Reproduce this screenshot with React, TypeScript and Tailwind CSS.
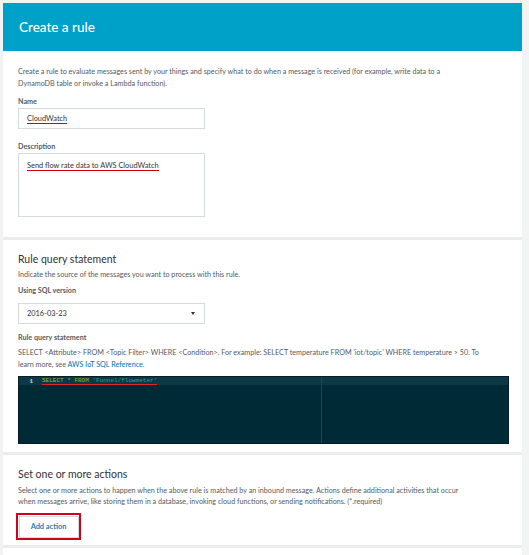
export default function App() {
  const font = { fontFamily: '"Lato", "Open Sans", sans-serif' };
  const mono = { fontFamily: '"Liberation Mono", monospace' };
  return (
    <div
      className="w-[529px] h-[555px] overflow-hidden bg-[#f2f3f3] pt-[3px] pl-[3px] text-[#545b64]"
      style={font}
    >
      <div className="w-[519px] bg-white flex flex-col">
        {/* header */}
        <div className="h-[48px] bg-[#00a1c9] flex items-center px-[16px]">
          <div className="text-white text-[13.5px] font-medium">Create a rule</div>
        </div>

        {/* section 1 */}
        <div className="h-[186px] px-[15px] pt-[15px] flex flex-col">
          <p className="text-[7.2px] leading-[12px] w-[460px]">
            Create a rule to evaluate messages sent by your things and specify what to do when a message is received (for example, write data to a DynamoDB table or invoke a Lambda function).
          </p>
          <div className="mt-[6px] text-[7.2px] leading-[12px] font-bold">Name</div>
          <div className="mt-0 w-[187px] h-[21px] border border-[#d5dbdb] flex items-center px-[8px]">
            <span className="text-[7.4px] text-[#333] border-b border-[#d0021b] leading-[9px]">CloudWatch</span>
          </div>
          <div className="mt-[12px] text-[7.2px] leading-[12px] font-bold">Description</div>
          <div className="mt-0 w-[187px] h-[64px] border border-[#d5dbdb] px-[8px] pt-[7px] flex items-start">
            <span className="text-[7.4px] text-[#333] border-b border-[#d0021b] leading-[9px]">
              Send flow rate data to AWS CloudWatch
            </span>
          </div>
        </div>

        <div className="h-[3px] bg-[#eaeded]" />

        {/* section 2 */}
        <div className="h-[212px] px-[15px] pt-[12px] flex flex-col">
          <div className="text-[10.5px] leading-[14px] text-[#333]">Rule query statement</div>
          <div className="mt-[3px] text-[7.2px] leading-[12px]">
            Indicate the source of the messages you want to process with this rule.
          </div>
          <div className="mt-[4px] text-[7.2px] leading-[12px] font-bold">Using SQL version</div>
          <div className="mt-[6px] w-[187px] h-[21px] border border-[#d5dbdb] flex items-center justify-between px-[8px]">
            <span className="text-[7.4px] text-[#333]">2016-03-23</span>
            <span className="w-0 h-0 border-l-[2.5px] border-r-[2.5px] border-t-[3px] border-l-transparent border-r-transparent border-t-[#333] mr-[1px]" />
          </div>
          <div className="mt-[8px] text-[7.2px] leading-[12px] font-bold">Rule query statement</div>
          <div className="mt-[3px] text-[7.2px] leading-[12px] flex flex-col">
            <span>
              SELECT &lt;Attribute&gt; FROM &lt;Topic Filter&gt; WHERE &lt;Condition&gt;. For example: SELECT temperature FROM 'iot/topic' WHERE temperature &gt; 50. To
            </span>
            <span>
              learn more, see <span className="text-[#0073bb]">AWS IoT SQL Reference</span>.
            </span>
          </div>
          <div className="mt-[5px] w-[491px] h-[68px] bg-[#002b36] border border-[#0b1e24] relative flex flex-col">
            <div className="h-[8px] bg-[#0b3a46] flex items-center">
              <div className="w-[23px] text-right pr-[9px] text-[6px] font-bold text-[#c9d6d9]" style={mono}>
                1
              </div>
              <div className="text-[6px] leading-[7px] border-b-[1.5px] border-[#e0262a] whitespace-pre" style={mono}>
                <span className="text-[#9bb52b]">SELECT</span>
                <span className="text-[#93a1a1]"> * </span>
                <span className="text-[#9bb52b]">FROM</span>
                <span className="text-[#2aa198]"> 'Funnel/flowmeter'</span>
              </div>
            </div>
            <div className="absolute top-0 bottom-0 left-[302px] w-px bg-[#1f4652]" />
          </div>
        </div>

        <div className="h-[3px] bg-[#eaeded]" />

        {/* section 3 */}
        <div className="h-[90px] px-[15px] pt-[12px] flex flex-col">
          <div className="text-[10.5px] leading-[14px] text-[#333]">Set one or more actions</div>
          <div className="mt-[4px] text-[7.2px] leading-[11px] flex flex-col">
            <span>
              Select one or more actions to happen when the above rule is matched by an inbound message. Actions define additional activities that occur
            </span>
            <span>
              when messages arrive, like storing them in a database, invoking cloud functions, or sending notifications. (*.required)
            </span>
          </div>
          <div className="mt-[6px] w-[65px] h-[27px] border-2 border-[#d0021b] -ml-[2px] flex items-center justify-center">
            <button className="w-[60px] h-[22px] border border-[#d5dbdb] bg-white text-[7.4px] font-bold text-[#1b7fb5]">
              Add action
            </button>
          </div>
        </div>

        <div className="h-[3px] bg-[#eaeded]" />
        <div className="h-[20px] bg-white" />
      </div>
    </div>
  );
}
